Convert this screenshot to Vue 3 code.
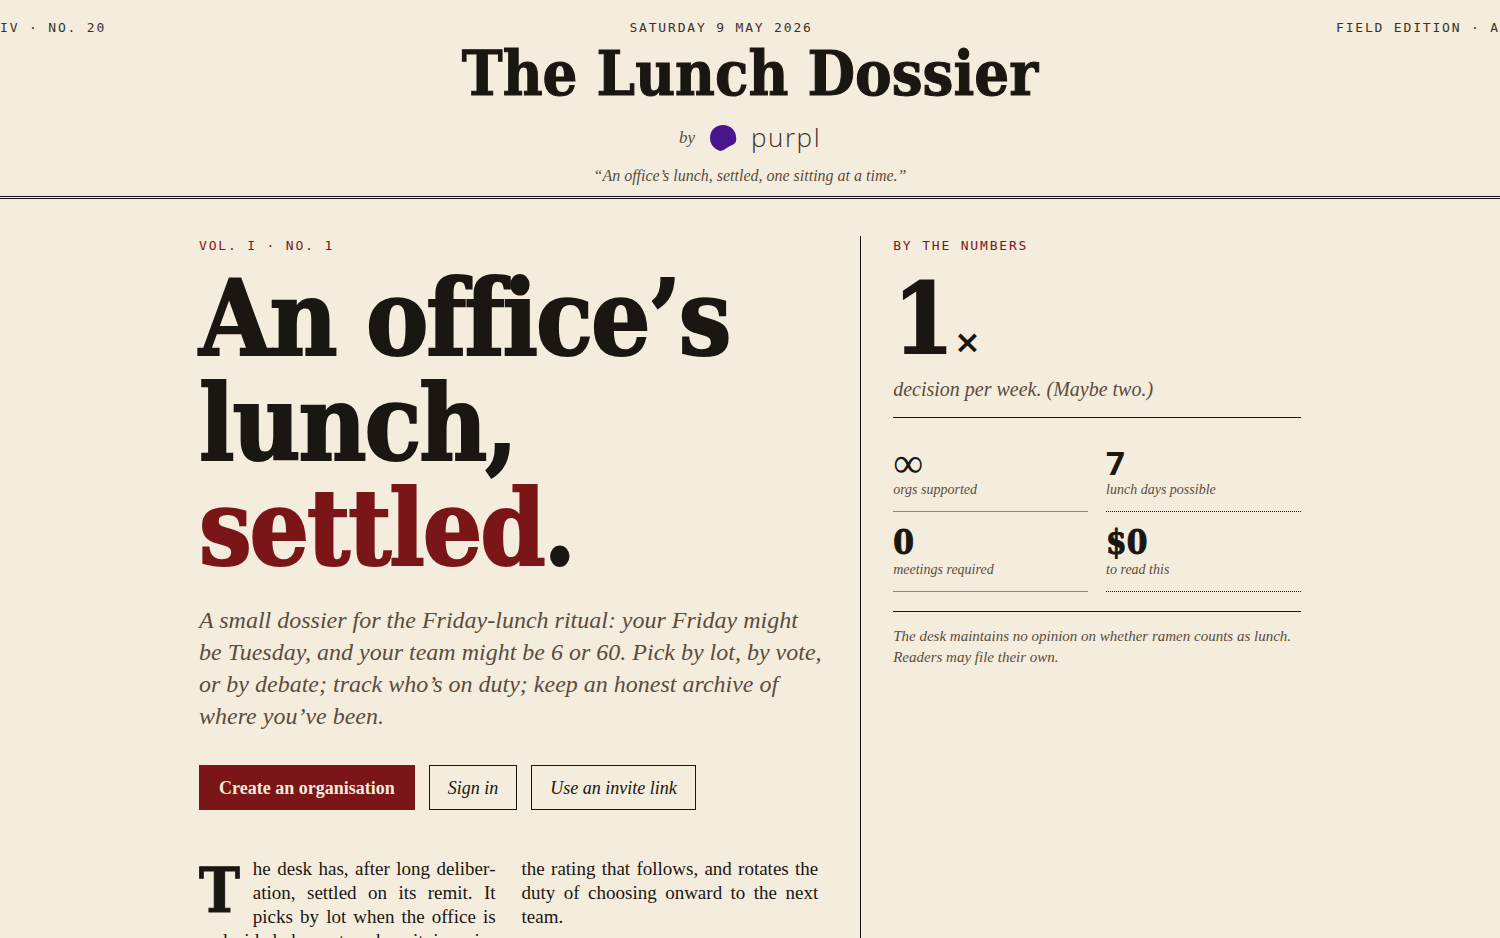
<script setup>
const stats = [
  { value: '∞', label: 'orgs supported', face: 'thin' },
  { value: '7', label: 'lunch days possible', face: 'sans' },
  { value: '0', label: 'meetings required' },
  { value: '$0', label: 'to read this' },
]
</script>

<template>
  <div class="page">
    <header class="masthead">
      <div class="strip">
        <span>IV · NO. 20</span>
        <span>SATURDAY 9 MAY 2026</span>
        <span>FIELD EDITION · A</span>
      </div>
      <p class="title">The Lunch Dossier</p>
      <div class="byline">
        <span class="by">by</span>
        <svg class="blob" viewBox="0 0 28 28" aria-hidden="true">
          <path d="M14 1C21 1 27 6 27 13C28 18 26 20 22 21.500C18 23 15 27 11 27C5 25 1 20 1 14C1 6 7 1 14 1Z" fill="#4a148c" />
        </svg>
        <span class="brand">purpl</span>
      </div>
      <p class="motto">“An office’s lunch, settled, one sitting at a time.”</p>
    </header>

    <main class="spread">
      <section class="lead">
        <p class="kicker">VOL. I · NO. 1</p>
        <h1>An office’s<br />lunch,<br /><em>settled</em>.</h1>
        <p class="deck">
          A small dossier for the Friday-lunch ritual: your Friday might<br />
          be Tuesday, and your team might be 6 or 60. Pick by lot, by vote,<br />
          or by debate; track who’s on duty; keep an honest archive of<br />
          where you’ve been.
        </p>
        <div class="actions">
          <button type="button" class="primary">Create an organisation</button>
          <button type="button">Sign in</button>
          <button type="button">Use an invite link</button>
        </div>
        <div class="story">
          <p>
            <span class="cap">T</span>he desk has, after long deliber&shy;ation, settled on its remit. It
            picks by lot when the office is undecided, by vote when it is opin&shy;ionated.
          </p>
          <p>the rating that follows, and rotates the duty of choosing onward to the next team.</p>
        </div>
      </section>

      <aside class="numbers">
        <p class="kicker">BY THE NUMBERS</p>
        <p class="big">1<span>×</span></p>
        <p class="caption">decision per week. (Maybe two.)</p>
        <dl class="stats">
          <div v-for="s in stats" :key="s.label" class="stat">
            <dt :class="s.face">{{ s.value }}</dt>
            <dd>{{ s.label }}</dd>
          </div>
        </dl>
        <p class="note">
          The desk maintains no opinion on whether ramen counts as lunch.<br />Readers may file their own.
        </p>
      </aside>
    </main>
  </div>
</template>

<style>
body {
  margin: 0;
  background: #f4ecdc;
}
</style>

<style scoped>
.page {
  display: flex;
  flex-direction: column;
  height: 100vh;
  overflow: hidden;
  color: #1a1612;
  background: #f4ecdc;
  font-family: "Liberation Serif", serif;
}
p, h1, dl, dd { margin: 0; }
.masthead {
  flex: none;
  padding-top: 19px;
  border-bottom: 3px double #1a1214;
  text-align: center;
}
.strip {
  display: flex;
  justify-content: space-between;
  font: 13px/18px "DejaVu Sans Mono", monospace;
  letter-spacing: 0.14em;
  white-space: nowrap;
  color: #3a322a;
}
.title, h1, .big, dt, .cap {
  font-family: "DejaVu Serif Condensed", "DejaVu Serif", serif;
  font-weight: 700;
}
.title {
  font-size: 61px;
  line-height: 74px;
  -webkit-text-stroke: 1px #1a1612;
}
.byline {
  display: flex;
  align-items: center;
  justify-content: center;
  gap: 14px;
  height: 32px;
  margin-top: 11px;
  color: #5a4c3e;
}
.by { font-size: 17px; font-style: italic; }
.blob { width: 28px; height: 28px; }
.brand { font: 300 26px/30px "Open Sans", sans-serif; letter-spacing: 0.06em; padding-bottom: 3px; color: #3a322a; }
.motto {
  margin-top: 11px;
  padding-bottom: 9px;
  font-size: 16px;
  line-height: 22px;
  font-style: italic;
  color: #5a4c3e;
}
.spread {
  flex: 1;
  display: grid;
  grid-template-columns: minmax(0, 3fr) minmax(0, 2fr);
  width: 100%;
  max-width: 1102px;
  margin: 37px auto 0;
  min-height: 0;
}
.lead { padding-right: 42px; }
.numbers { padding-left: 32px; border-left: 1px solid #1a1612; }
.kicker {
  font: 13px/20px "DejaVu Sans Mono", monospace;
  letter-spacing: 0.14em;
  color: #7a1518;
}
h1 {
  margin-top: 10px;
  font-size: 104px;
  line-height: 105px;
  letter-spacing: -0.02em;
  white-space: nowrap;
  -webkit-text-stroke: 2px currentColor;
}
h1 em { font-style: normal; color: #7a1518; }
.deck {
  margin-top: 23px;
  font-size: 24px;
  line-height: 32px;
  font-style: italic;
  white-space: nowrap;
  color: #5a4c3e;
}
.actions { display: flex; gap: 14px; margin-top: 33px; }
button {
  height: 45px;
  padding: 0 18px;
  border: 1px solid #1a1612;
  background: transparent;
  color: #1a1612;
  font: italic 18px/24px "Liberation Serif", serif;
  white-space: nowrap;
}
.primary {
  padding: 0 19px;
  border-color: #7a1518;
  background: #7a1518;
  color: #f4ecdc;
  font-style: normal;
  font-weight: 700;
}
.story {
  display: grid;
  grid-template-columns: 1fr 1fr;
  gap: 26px;
  margin-top: 47px;
  font-size: 19px;
  line-height: 24px;
  text-align: justify;
}
.cap {
  float: left;
  padding-right: 13px;
  font-size: 61px;
  line-height: 68px;
  -webkit-text-stroke: 1px #1a1612;
}
.big {
  margin-top: 14px;
  font-size: 97px;
  line-height: 98px;
  -webkit-text-stroke: 2px #1a1612;
}
.big span {
  font-family: "DejaVu Sans", sans-serif;
  font-size: 32px;
  line-height: 32px;
  -webkit-text-stroke: 0;
}
.caption { margin-top: 7px; font-size: 20px; line-height: 28px; font-style: italic; color: #5a4c3e; }
.stats {
  display: grid;
  grid-template-columns: 1fr 1fr;
  gap: 0 18px;
  margin-top: 14px;
  padding: 14px 0 19px;
  border-top: 1px solid #1a1612;
  border-bottom: 1px solid #1a1612;
}
.stat { padding: 14px 0 12px; border-bottom: 1px dotted #1a1612; }
.stat:nth-child(odd) { border-bottom: 1px solid #8f877a; }
dt { font-size: 33px; line-height: 34px; -webkit-text-stroke: 1px #1a1612; }
.sans { font-family: "Noto Sans", sans-serif; -webkit-text-stroke: 0; }
.thin { font-family: "Liberation Serif", serif; font-size: 42px; font-weight: 400; -webkit-text-stroke: 0; }
dd { font-size: 14px; line-height: 19px; font-style: italic; color: #5a4c3e; }
.note { margin-top: 14px; font-size: 15px; line-height: 21px; font-style: italic; white-space: nowrap; color: #5a4c3e; }
</style>
